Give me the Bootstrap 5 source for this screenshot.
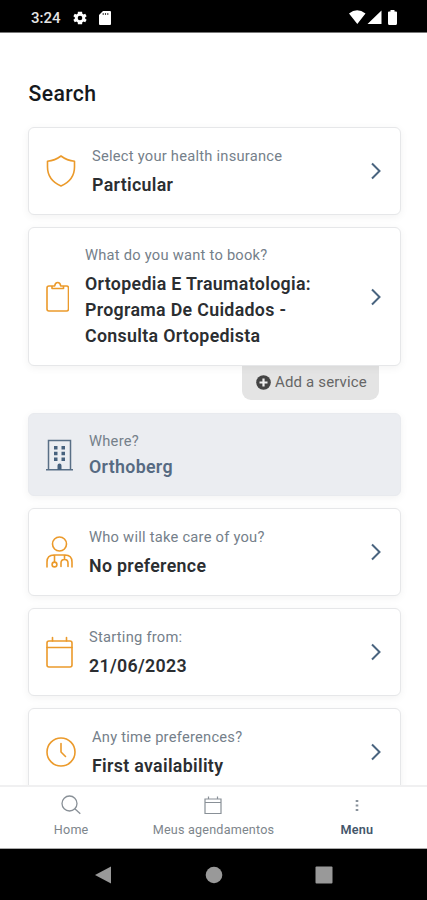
<!DOCTYPE html>
<html lang="en">
<head>
<meta charset="utf-8">
<meta name="viewport" content="width=device-width, initial-scale=1">
<title>Search</title>
<link href="https://cdn.jsdelivr.net/npm/bootstrap@5.3.0/dist/css/bootstrap.min.css" rel="stylesheet">
<style>
body{font-family:Roboto,"Liberation Sans",sans-serif;background:#fff;color:#1c1f22}
.phone{width:427px;height:900px}
.status{height:33px;padding:3px 29px 0 31px;border-bottom:1px solid #777}
.clock{font-size:15px;font-weight:500;width:42px;line-height:30px;color:#e4e4e4}
.sd{margin-left:12px}
.content{padding:0 26px 0 28px;min-height:0}
.heading{font-size:21.2px;font-weight:500;line-height:26px;margin:48px 0 20px .5px;letter-spacing:.35px;color:#15191d}
.tile{height:88px;border:1px solid #e6e7e9;border-radius:6px;padding:0 17px;margin-bottom:12px;gap:16px;background:#fff;box-shadow:0 2px 9px rgba(0,0,0,.055)}
.tile svg{flex:none}
.tile-tall{height:139px;margin-bottom:0;position:relative}
.tile-place{height:83px;background:#ebedf1;border-color:#e8eaee}
.tile .go{margin-left:auto}
.lbl{font-size:14.7px;line-height:22px;letter-spacing:.24px;color:#75808a;margin-bottom:5px;white-space:nowrap}
.val{font-size:17.8px;line-height:25.7px;font-weight:600;letter-spacing:.32px;color:#2b2e31;white-space:nowrap}
.tile-place .lbl{margin-bottom:2px}
.tile-place .val{color:#566a82}
.add{height:34px;width:137px;background:#e4e4e4;border-radius:0 0 9px 9px;margin:0 22.5px 13px 0;padding:0 0 1px 3px;color:#666;font-size:15px;letter-spacing:.15px;gap:4px}
.tabs{height:64px;border-top:2px solid #f0f0f1;border-bottom:1px solid #aaa;background:#fff;font-size:12.6px;line-height:16px;color:#7d858b;letter-spacing:.2px}
.tab{width:143px;padding:8px 0 0;gap:6.500px;white-space:nowrap}
.tab.current{color:#43566a;font-weight:600;padding-left:2px}
.keys{height:51px}
.or{stroke:#eb9a2b;stroke-width:1.6;fill:none;stroke-linecap:round;stroke-linejoin:round}
</style>
<script src="https://cdn.jsdelivr.net/npm/bootstrap@5.3.0/dist/js/bootstrap.bundle.min.js"></script>
</head>
<body>
<div class="phone d-flex flex-column overflow-hidden">
  <header class="status bg-black text-white d-flex align-items-center flex-shrink-0">
    <span class="clock">3:24</span>
    <svg width="14" height="14" viewBox="2 2 20 20" fill="#fff"><path d="M19.4 13a7.600 7.600 0 0 0 0-2l2.100-1.600-2-3.500-2.500 1a7.500 7.500 0 0 0-1.700-1L15 3H9l-.3 2.900a7.500 7.500 0 0 0-1.700 1l-2.500-1-2 3.500L4.600 11a7.600 7.600 0 0 0 0 2l-2.100 1.600 2 3.500 2.500-1a7.500 7.500 0 0 0 1.700 1L9 21h6l.3-2.900a7.500 7.500 0 0 0 1.700-1l2.500 1 2-3.500zM12 15.300a3.300 3.300 0 1 1 0-6.600 3.300 3.300 0 0 1 0 6.600z"/></svg>
    <svg class="sd" width="12" height="14" viewBox="0 0 12 14"><path d="M4 0h7q1 0 1 1v12q0 1-1 1H1q-1 0-1-1V4z" fill="#fff"/><path d="M4.200 2v2M6.500 2v2M8.800 2v2" stroke="#444" stroke-width="1.100"/></svg>
    <svg class="ms-auto" width="49" height="15" viewBox="0 0 49 15" fill="#fff"><path d="M0 3.500Q8-3 16.500 3.500L8.300 14zM32.500 .5V14H18.500zM40 1.500h1.500V0h4v1.500H47q1 0 1 1v11q0 1.500-1.500 1.500h-6q-1.500 0-1.500-1.500v-11q0-1 1-1z"/></svg>
  </header>

  <main class="content flex-grow-1 overflow-hidden">
    <h1 class="heading">Search</h1>

    <div class="tile d-flex align-items-center">
      <svg class="or" width="30" height="32" viewBox="0 0 30 32"><path d="M15 1Q9 5.500 1.500 6.200V12C1.500 21 7 27.500 15 31c8-3.500 13.500-10 13.500-19V6.200Q21 5.500 15 1z"/></svg>
      <div><div class="lbl">Select your health insurance</div><div class="val">Particular</div></div>
      <svg class="go" width="14" height="18" viewBox="0 0 14 18" fill="none" stroke="#49647f" stroke-width="2"><path d="M3 1.500 10.500 9 3 16.500"/></svg>
    </div>

    <div class="tile tile-tall d-flex align-items-center">
      <svg class="or" width="23" height="32" viewBox="0 0 23 32"><path d="M6.500 5H3Q1 5 1 7v21q0 2 2 2h17.500q2 0 2-2V7q0-2-2-2H17M6 7.500V5h2.700q.5-3.500 3-3.500t3 3.500h2.800v2.500z"/></svg>
      <div><div class="lbl">What do you want to book?</div><div class="val">Ortopedia E Traumatologia:<br>Programa De Cuidados -<br>Consulta Ortopedista</div></div>
      <svg class="go" width="14" height="18" viewBox="0 0 14 18" fill="none" stroke="#49647f" stroke-width="2"><path d="M3 1.500 10.500 9 3 16.500"/></svg>
    </div>
    <div class="d-flex justify-content-end">
      <div class="add d-flex align-items-center justify-content-center">
        <svg width="15" height="15" viewBox="0 0 15 15"><circle cx="7.500" cy="7.500" r="7.300" fill="#444"/><path d="M7.500 3.500v8M3.500 7.500h8" stroke="#eee" stroke-width="2.200"/></svg>
        <span>Add a service</span>
      </div>
    </div>

    <div class="tile tile-place d-flex align-items-center">
      <svg width="27" height="32" viewBox="0 0 27 32" fill="none" stroke="#596f86" stroke-width="1.500"><path d="M2.500 31V1.500h22V31M0 30.800h27"/><g fill="#46617d" stroke="none"><path d="M8 7h3.500v3.500H8zM15.500 7H19v3.500h-3.500zM8 12.700h3.500v3.500H8zM15.500 12.700H19v3.500h-3.500zM8 18.500h3.500V22H8zM15.500 18.500H19V22h-3.500zM11.500 31v-4.500q0-2 2-2t2 2V31z"/></g></svg>
      <div><div class="lbl">Where?</div><div class="val">Orthoberg</div></div>
    </div>

    <div class="tile d-flex align-items-center">
      <svg class="or" width="27" height="32" viewBox="0 0 27 32"><circle cx="13.500" cy="8" r="7"/><path d="M1 31v-5q0-7 7-7h11q7 0 7 7v5M8.500 19v7M18.500 19v4M15 30.500V27q0-3.500 3.500-3.500T22 27v3.500"/><circle cx="8.500" cy="28.500" r="2.400"/></svg>
      <div><div class="lbl">Who will take care of you?</div><div class="val">No preference</div></div>
      <svg class="go" width="14" height="18" viewBox="0 0 14 18" fill="none" stroke="#49647f" stroke-width="2"><path d="M3 1.500 10.500 9 3 16.500"/></svg>
    </div>

    <div class="tile d-flex align-items-center">
      <svg class="or" width="27" height="32" viewBox="0 0 27 32"><rect x="1" y="5" width="25" height="26" rx="2"/><path d="M1 11.500h25M6.500 1.500V5M20.500 1.500V5"/></svg>
      <div><div class="lbl">Starting from:</div><div class="val">21/06/2023</div></div>
      <svg class="go" width="14" height="18" viewBox="0 0 14 18" fill="none" stroke="#49647f" stroke-width="2"><path d="M3 1.500 10.500 9 3 16.500"/></svg>
    </div>

    <div class="tile d-flex align-items-center">
      <svg class="or" width="30" height="30" viewBox="0 0 30 30"><circle cx="15" cy="15" r="14"/><path d="M15 6.500V15l4.500 4.500"/></svg>
      <div><div class="lbl">Any time preferences?</div><div class="val">First availability</div></div>
      <svg class="go" width="14" height="18" viewBox="0 0 14 18" fill="none" stroke="#49647f" stroke-width="2"><path d="M3 1.500 10.500 9 3 16.500"/></svg>
    </div>
  </main>

  <nav class="tabs d-flex flex-shrink-0">
    <div class="tab d-flex flex-column align-items-center">
      <svg width="20" height="20" viewBox="0 0 20 20" fill="none" stroke="#899097" stroke-width="1.300"><circle cx="8.500" cy="8.500" r="7.500"/><path d="m13.800 13.800 5.500 5"/></svg>
      <span>Home</span>
    </div>
    <div class="tab d-flex flex-column align-items-center">
      <svg width="18" height="20" viewBox="0 0 18 20" fill="none" stroke="#899097" stroke-width="1.200"><path d="M1 4h16v14.500H1zM1 7.500h16M4.500 1.500V4M13.500 1.500V4"/></svg>
      <span>Meus agendamentos</span>
    </div>
    <div class="tab current d-flex flex-column align-items-center">
      <svg width="4" height="20" viewBox="0 0 4 20" fill="#89929b"><path d="M.7 5h2.600v2H.7zM.7 9.500h2.600v2H.7zM.7 14h2.600v2H.7z"/></svg>
      <span>Menu</span>
    </div>
  </nav>
  <footer class="keys bg-black flex-shrink-0 d-flex justify-content-center align-items-center">
    <svg width="240" height="18" viewBox="0 0 240 18" fill="#999"><path d="M1 9 17 .5v17z"/><circle cx="120" cy="9" r="8.300"/><rect x="221.500" y=".5" width="17" height="17" rx="1"/></svg>
  </footer>
</div>
</body>
</html>
